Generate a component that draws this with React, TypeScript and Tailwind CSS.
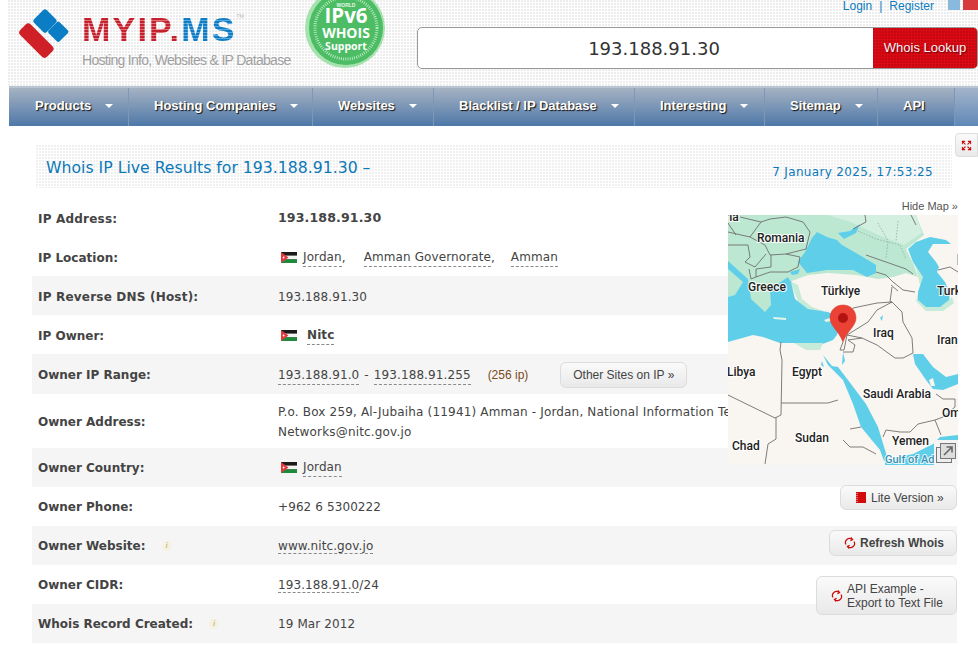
import type { ReactNode } from 'react';
import { Expand } from 'lucide-react';

const navItems = [
    { title: "Products", width: "w-[120px]", arrow: true },
    { title: "Hosting Companies", width: "w-[184px]", arrow: true },
    { title: "Websites", width: "w-[121px]", arrow: true },
    { title: "Blacklist / IP Database", width: "w-[201px]", arrow: true },
    { title: "Interesting", width: "w-[130px]", arrow: true },
    { title: "Sitemap", width: "w-[113px]", arrow: true },
    { title: "API", width: "w-[77px]", arrow: false },
];

function Flag() {
    return (
        <svg width="16" height="11" viewBox="0 0 16 11" className="shrink-0">
            <rect width="16" height="11" fill="#1a1a1a" />
            <rect y="3.6" width="16" height="3.8" fill="#f4f4f4" />
            <rect y="7.4" width="16" height="3.6" fill="#1f8a3c" />
            <path d="M0 0 L7.5 5.5 L0 11 Z" fill="#e03a3e" />
            <circle cx="2.6" cy="5.5" r="0.9" fill="#fff" />
        </svg>
    );
}

function Dashed({ children, className = "" }: { children: ReactNode; className?: string }) {
    return <span className={`border-b border-dashed border-[#8a8a8a] ${className}`}>{children}</span>;
}

function Info() {
    return (
        <span className="flex h-[10px] w-[10px] items-center justify-center rounded-full bg-[#f6f2e2] font-['Liberation_Serif',serif] text-[8px] italic leading-none text-[#c9bd8c]">
            i
        </span>
    );
}

function Row({ label, gray, h, low, wide, info, children }: { label: string; gray?: boolean; h: string; low?: boolean; wide?: boolean; info?: boolean; children: ReactNode }) {
    return (
        <div className={`flex items-center ${h} ${low ? "pt-[2px]" : ""} ${gray ? "bg-[#f5f5f5]" : "bg-white"}`}>
            <div className={`flex w-[246px] items-center pl-[6px] text-[12px] font-bold text-[#444] ${wide ? "tracking-[0.2px]" : ""}`}>
                {label}
                {info && <span className="ml-[16px]"><Info /></span>}
            </div>
            <div className="whitespace-nowrap text-[12px] tracking-[0.1px] text-[#444]">{children}</div>
        </div>
    );
}

function RefreshIcon() {
    return (
        <svg width="12" height="12" viewBox="0 0 12 12" fill="none" stroke="#cc0a0a" strokeWidth="1.2" className="shrink-0">
            <path d="M2 7.5 A4 4 0 0 1 8 2.4" />
            <path d="M10 4.5 A4 4 0 0 1 4 9.6" />
            <path d="M6.8 0.5 L8.6 2.6 L6.4 3.8" />
            <path d="M5.2 11.5 L3.4 9.4 L5.6 8.2" />
        </svg>
    );
}

const btn = "flex items-center rounded-[6px] border border-[#dcdcdc] bg-gradient-to-b from-[#fafafa] to-[#e9e9e9] font-['Liberation_Sans',sans-serif] text-[12px] text-[#444]";

function MapLabel({ x, y, children, fill = "#222", size = 12 }: { x: number; y: number; children: string; fill?: string; size?: number }) {
    return (
        <text x={x} y={y} fontSize={size} fontFamily="Roboto, sans-serif" fontWeight="500" fill={fill} stroke="#fff" strokeWidth="2.2" strokeOpacity="0.85" paintOrder="stroke">
            {children}
        </text>
    );
}

function MapDrawing() {
    const border = { fill: "none", stroke: "#6f6f6f", strokeWidth: 0.9 };
    return (
        <svg width="230" height="250" viewBox="0 0 230 250" className="block">
            <rect width="230" height="250" fill="#f9f6f1" />
            {/* green land */}
            <path d="M0 0 H188 L196 20 L178 34 L186 50 L190 62 L178 58 L165 62 L150 64 L128 60 L100 58 L80 60 L64 66 L62 74 L66 86 L60 70 L44 76 L44 92 L37 98 L20 84 L18 64 L0 60 Z" fill="#bce8d2" />
            <path d="M100 0 H188 L194 18 L176 30 L150 20 L125 8 Z" fill="#d2efdf" />
            <path d="M186 44 L192 70 L188 86 L198 96 L215 96 L226 88 L224 82 L212 90 L200 88 L194 80 L198 60 Z" fill="#c6ebd8" />
            <path d="M62 66 L70 86 L82 96 L96 96 L84 92 L74 84 L70 70 Z" fill="#c6ebd8" />
            {/* med */}
            <path d="M0 46 L20 64 L23 84 L37 97 L43 90 L42 74 L60 62 L63 67 L67 84 L80 94 L100 97 L115 104 L112 107 L109 120 L105 125 L92 130 L79 128 L52 128 L35 122 L25 120 L0 127 Z" fill="#5fcfe9" />
            <path d="M0 54 L15 67 L7 80 L0 82 Z" fill="#bce8d2" />
            <path d="M45 102 L58 103 L58 105 L46 104 Z" fill="#e6f5ea" />
            <path d="M96 105 L104 102 L104 106 L98 107 Z" fill="#e6f5ea" />
            <path d="M62 57 L72 54 L70 59 L64 60 Z" fill="#5fcfe9" />
            <path d="M66 128 L95 128 L92 135 L78 135 Z" fill="#c6ebd8" />
            {/* black sea, azov */}
            <path d="M70 47 L77 37 L84 23 L89 17 L99 22 L109 25 L114 30 L128 38 L140 45 L148 50 L148 58 L139 62 L125 55 L99 55 L79 58 Z" fill="#5fcfe9" />
            <path d="M110 18 L122 16 L132 9 L128 18 L116 24 Z" fill="#5fcfe9" />
            {/* caspian */}
            <path d="M180 34 L188 27 L202 22 L218 25 L223 29 L205 29 L200 37 L208 47 L211 52 L209 57 L217 67 L222 78 L221 85 L212 92 L198 92 L190 85 L190 77 L195 62 L185 47 Z" fill="#5fcfe9" />
            {/* red sea */}
            <path d="M95 140 L100 150 L108 158 L115 165 L125 189 L133 212 L152 235 L156 246 L160 245 L157 235 L150 212 L138 189 L120 165 L110 152 L104 151 Z" fill="#5fcfe9" />
            <path d="M115 137 L117 146 L114 150 Z" fill="#5fcfe9" />
            {/* gulf */}
            <path d="M185 139 L195 139 L205 152 L218 162 L230 159 L230 169 L215 175 L205 174 L198 165 L187 149 Z" fill="#5fcfe9" />
            <path d="M201 165 L205 163 L207 171 L203 171 Z" fill="#f9f6f1" />
            {/* aden */}
            <path d="M157 250 L157 245 L185 239 L205 229 L212 222 L230 220 V250 Z" fill="#5fcfe9" />
            {/* lakes */}
            <path d="M152 103 L155 100 L154 106 Z M94 146 L96 152 L93 150 Z" fill="#5fcfe9" />
            {/* borders */}
            <path {...border} d="M53 127 L52 135 L54 145 L53 200 M53 188 H100 L110 185 M0 180 L47 203 L53 200 M48 202 V224 L40 229 L37 249" />
            <path {...border} d="M155 222 L158 215 L172 217 L182 217 L190 209 L207 205 L215 202 L227 192 L227 184 L215 184 L208 179 M207 205 L213 220" />
            <path {...border} d="M115 225 L122 232 L135 232 L148 239 M133 212 L122 214" />
            <path {...border} d="M125 93 L149 88 L164 87 L162 87 L164 72 M119 120 L140 107 L149 95 L164 87 L174 97 L175 107 L184 123 L185 138 M134 123 L149 130 L167 143 L175 143 L185 138" />
            <path {...border} d="M115 137 L125 137 L127 130 L120 125 L134 123 L119 120 L116 135 L112 135 L115 127 M112 112 L119 109 L125 93" />
            <path {...border} d="M33 7 L42 4 L58 2 L75 7 L82 17 L78 34 L58 39 L42 40 L37 30 L22 22 L33 7 M22 22 L0 17 M20 30 L22 42 L17 47 L27 52 L38 39 M0 30 L20 30 M43 40 L43 52 L28 54 L28 62 L42 57 L60 57 L70 52 L72 42 L58 39 M28 62 L23 64 L21 54 M12 2 L33 7 M0 8 L8 20" />
            <path {...border} d="M138 40 L158 47 L178 54 L185 59 M148 57 L158 60 L165 67 L175 75 L187 77 M163 70 L170 76 M137 0 L138 7 L125 14 M183 0 L188 10 M210 55 L222 52 L230 57 M230 39 V50" />
            <path d="M130 16 L148 24 L172 30 L178 44 M150 8 L160 26 L158 44 M170 6 L168 26" fill="none" stroke="#8f9c96" strokeWidth="0.7" strokeDasharray="1.5 1.5" />
            {/* labels */}
            <MapLabel x={-3} y={6}>ria</MapLabel>
            <MapLabel x={29} y={27}>Romania</MapLabel>
            <MapLabel x={20} y={76}>Greece</MapLabel>
            <MapLabel x={93} y={80}>Türkiye</MapLabel>
            <MapLabel x={209} y={80}>Turk</MapLabel>
            <MapLabel x={145} y={122}>Iraq</MapLabel>
            <MapLabel x={209} y={129}>Iran</MapLabel>
            <MapLabel x={-1} y={161}>Libya</MapLabel>
            <MapLabel x={64} y={161}>Egypt</MapLabel>
            <MapLabel x={135} y={183}>Saudi Arabia</MapLabel>
            <MapLabel x={214} y={202}>Om</MapLabel>
            <MapLabel x={67} y={227}>Sudan</MapLabel>
            <MapLabel x={4} y={235}>Chad</MapLabel>
            <MapLabel x={164} y={230}>Yemen</MapLabel>
            <MapLabel x={157} y={248} fill="#3b93b5" size={11}>Gulf of Aden</MapLabel>
            {/* pin */}
            <path d="M115 90 C107 90 102 96 102 103 C102 111 111 116 115 127 C119 116 128 111 128 103 C128 96 123 90 115 90 Z" fill="#ea4335" stroke="#d5352b" strokeWidth="0.5" />
            <circle cx="115" cy="103" r="5" fill="#b31412" />
            {/* expand control */}
            <rect x="206" y="225" width="24" height="25" fill="#f4f4f4" />
            <rect x="208.5" y="232.5" width="15" height="15" fill="#eee" stroke="#777" />
            <rect x="212.5" y="228.5" width="15" height="15" fill="#ddd" stroke="#777" />
            <path d="M216 240 L224 232 M218.5 232 H224 V237.5" fill="none" stroke="#666" strokeWidth="1.6" />
        </svg>
    );
}

export default function App() {
    return (
        <div className="h-[646px] w-[978px] overflow-hidden bg-white font-['DejaVu_Sans',sans-serif]">
            {/* Header */}
            <header className="ml-2 flex h-[86px] bg-[radial-gradient(circle_at_1px_1px,#ececec_1px,transparent_1px)] bg-[length:3px_3px]">
                <div className="flex w-[296px] pt-[7px] pl-[11px]">
                    <svg width="54" height="52" viewBox="0 0 54 52" className="mt-[1px] shrink-0">
                        <rect x="17" y="4" width="18" height="18" rx="2.5" fill="#0b7dc4" transform="rotate(45 26 13)" />
                        <rect x="31.5" y="16" width="15.5" height="15.5" rx="2" fill="#0b7dc4" transform="rotate(45 39.25 23.75)" />
                        <rect x="-2" y="25" width="38" height="15" rx="4" fill="#cf2027" transform="rotate(45 17 33)" />
                    </svg>
                    <div className="ml-[9px] pt-[5px]">
                        <div className="flex items-start font-['Liberation_Sans',sans-serif] text-[34px] leading-[34px] font-bold tracking-[2.2px]">
                            <span className="bg-[repeating-linear-gradient(180deg,#c4202e_0px,#c4202e_2px,#e0727a_2px,#e0727a_3px,#c4202e_3px)] bg-clip-text text-transparent">MYIP.</span>
                            <span className="bg-[repeating-linear-gradient(180deg,#0f7cc4_0px,#0f7cc4_2px,#5aaade_2px,#5aaade_3px,#0f7cc4_3px)] bg-clip-text text-transparent">MS</span>
                            <span className="mt-[2px] text-[5px] leading-none font-normal tracking-normal text-[#bbb]">TM</span>
                        </div>
                        <div className="mt-[6px] whitespace-nowrap font-['Liberation_Sans',sans-serif] text-[14px] leading-[16px] tracking-[-0.7px] text-[#a0a0a0]">
                            Hosting Info, Websites &amp; IP Database
                        </div>
                    </div>
                </div>
                <svg width="82" height="82" viewBox="0 0 82 82" className="mt-[-13px] shrink-0">
                    <circle cx="41" cy="41" r="40" fill="#a5e2ae" />
                    <circle cx="42" cy="41" r="37" fill="#4cbd64" />
                    <circle cx="42" cy="41" r="31" fill="none" stroke="#c9efcf" strokeWidth="3" strokeDasharray="0.8 1.4" />
                    <text x="42" y="20" textAnchor="middle" fontSize="5" fontWeight="700" fill="#e6f7e9" fontFamily="Liberation Sans, sans-serif">WORLD</text>
                    <text x="42" y="36" textAnchor="middle" fontSize="20.5" fontWeight="700" fill="#fff" fontFamily="Open Sans, sans-serif">IPv6</text>
                    <text x="42" y="51" textAnchor="middle" fontSize="14" fontWeight="700" fill="#fff" fontFamily="Open Sans, sans-serif">WHOIS</text>
                    <text x="42" y="63" textAnchor="middle" fontSize="10.5" fontWeight="700" fill="#fff" fontFamily="Open Sans, sans-serif">Support</text>
                </svg>
                <div className="ml-[31px] flex flex-1 flex-col">
                    <div className="flex h-[27px] items-start justify-end">
                        <div className="font-['Liberation_Sans',sans-serif] text-[12px] leading-[12px] text-[#0d7cc0]">
                            <span>Login</span>
                            <span className="mx-[7px]">|</span>
                            <span>Register</span>
                        </div>
                        <div className="ml-[14px] h-[10px] w-[12px] bg-[#8ab9de]" />
                        <div className="ml-[3px] h-[10px] w-[15px] bg-[#d8393c]" />
                    </div>
                    <div className="flex h-[42px] overflow-hidden rounded-[5px] border border-[#999] bg-white">
                        <div className="flex flex-1 items-center justify-center pl-[17px] text-[18px] text-[#333]">193.188.91.30</div>
                        <div className="flex w-[104px] items-center justify-center bg-[#dd0a14] bg-[radial-gradient(circle_at_1px_1px,#c20812_1px,transparent_1px)] bg-[length:3px_3px] font-['Liberation_Sans',sans-serif] text-[13px] text-[#f6f1f6] [text-shadow:1px_1px_1px_#7a0008]">
                            Whois Lookup
                        </div>
                    </div>
                </div>
            </header>

            {/* Nav */}
            <nav className="ml-[9px] flex h-[40px] border-t-2 border-[#b9c4d2] bg-gradient-to-b from-[#a6b2c2] to-[#4e78a8] font-['Liberation_Sans',sans-serif] text-[13px] font-bold text-white [text-shadow:1px_1px_1px_#111]">
                {navItems.map((item) => (
                    <div key={item.title} className={`flex items-center border-r border-[#7f97b5] pb-[2px] pl-[25px] first:pl-[26px] ${item.width}`}>
                        <span className="whitespace-nowrap">{item.title}</span>
                        {item.arrow && <span className="ml-[14px] h-0 w-0 border-x-[4px] border-t-[4px] border-x-transparent border-t-white" />}
                    </div>
                ))}
                <div className="flex-1 bg-gradient-to-b from-[#a3b4c9] to-[#5f88b8]" />
            </nav>

            {/* Main */}
            <main className="relative pt-[19px] pl-[32px] pr-[21px]">
                <div className="absolute top-[7px] right-0 flex h-[24px] w-[23px] items-center justify-center rounded-l-[4px] border border-[#ddd] bg-gradient-to-b from-[#fafafa] to-[#e9e9e9]">
                    <Expand size={11} color="#cc0a0a" strokeWidth={2.2} />
                </div>

                <div className="ml-[4px] mb-[10px] mr-[5px] flex h-[43px] items-start justify-between bg-[radial-gradient(circle_at_1px_1px,#f0f0f0_1px,transparent_1px)] bg-[length:3px_3px] pt-[13px] pl-[10px] pr-[19px] text-[#0b78b8]">
                    <div className="text-[15.7px] leading-[20px]">Whois IP Live Results for 193.188.91.30 –</div>
                    <div className="mt-[6px] text-[12px] leading-[16px] tracking-[0.33px]">7 January 2025, 17:53:25</div>
                </div>

                <Row label="IP Address:" h="h-[39px]" low wide>
                    <span className="text-[12.6px] font-bold">193.188.91.30</span>
                </Row>
                <Row label="IP Location:" h="h-[39px]" low>
                    <span className="flex items-center">
                        <span className="mr-[6px] ml-[3px]"><Flag /></span>
                        <Dashed>Jordan</Dashed>,
                        <Dashed className="ml-[18px]">Amman Governorate</Dashed>,
                        <Dashed className="ml-[16px]">Amman</Dashed>
                    </span>
                </Row>
                <Row label="IP Reverse DNS (Host):" h="h-[39px]" low wide gray>193.188.91.30</Row>
                <Row label="IP Owner:" h="h-[39px]" low>
                    <span className="flex items-center">
                        <span className="mr-[10px] ml-[3px]"><Flag /></span>
                        <Dashed className="font-bold">Nitc</Dashed>
                    </span>
                </Row>
                <Row label="Owner IP Range:" h="h-[40px]" low gray>
                    <span className="flex items-center">
                        <Dashed>193.188.91.0</Dashed>
                        <span className="mx-[5px]">-</span>
                        <Dashed>193.188.91.255</Dashed>
                        <span className="ml-[17px] font-['Liberation_Sans',sans-serif] text-[12px] tracking-normal text-[#7a4a1e]">(256 ip)</span>
                        <span className={`${btn} ml-[32px] h-[26px] w-[127px] justify-center tracking-normal`}>Other Sites on IP »</span>
                    </span>
                </Row>
                <Row label="Owner Address:" h="h-[54px]" low>
                    <div className="leading-[20px] tracking-[0.17px]">
                        P.o. Box 259, Al-Jubaiha (11941) Amman - Jordan, National Information Technology Center<br />
                        Networks@nitc.gov.jo
                    </div>
                </Row>
                <Row label="Owner Country:" h="h-[39px]" gray>
                    <span className="flex items-center">
                        <span className="mr-[6px] ml-[3px]"><Flag /></span>
                        <Dashed>Jordan</Dashed>
                    </span>
                </Row>
                <Row label="Owner Phone:" h="h-[39px]">+962 6 5300222</Row>
                <Row label="Owner Website:" h="h-[39px]" gray info>
                    <Dashed>www.nitc.gov.jo</Dashed>
                </Row>
                <Row label="Owner CIDR:" h="h-[39px]">
                    <Dashed>193.188.91.0</Dashed>/24
                </Row>
                <Row label="Whois Record Created:" h="h-[39px]" gray info>19 Mar 2012</Row>

                {/* Map and actions sit over the table */}
                <aside className="absolute top-[73px] right-[20px] flex w-[230px] flex-col items-end">
                    <div className="h-[16px] font-['Liberation_Sans',sans-serif] text-[11px] leading-[14px] text-[#555]">Hide Map »</div>
                    <MapDrawing />
                    <div className={`${btn} mt-[20px] mr-[1px] h-[25px] w-[117px] pl-[15px]`}>
                        <svg width="10" height="11" viewBox="0 0 10 11" className="mr-[5px] shrink-0">
                            <rect width="10" height="11" fill="#d30a0a" />
                            <path d="M1 1 V10" stroke="#fff" strokeWidth="0.8" strokeDasharray="1 1" />
                        </svg>
                        Lite Version »
                    </div>
                    <div className={`${btn} mt-[20px] mr-[1px] h-[26px] w-[128px] pl-[14px] font-bold`}>
                        <span className="mr-[4px]"><RefreshIcon /></span>
                        Refresh Whois
                    </div>
                    <div className={`${btn} mt-[20px] mr-[1px] h-[39px] w-[141px] pl-[14px] leading-[14px]`}>
                        <span className="mr-[4px]"><RefreshIcon /></span>
                        <span>API Example -<br />Export to Text File</span>
                    </div>
                </aside>
            </main>
        </div>
    );
}
